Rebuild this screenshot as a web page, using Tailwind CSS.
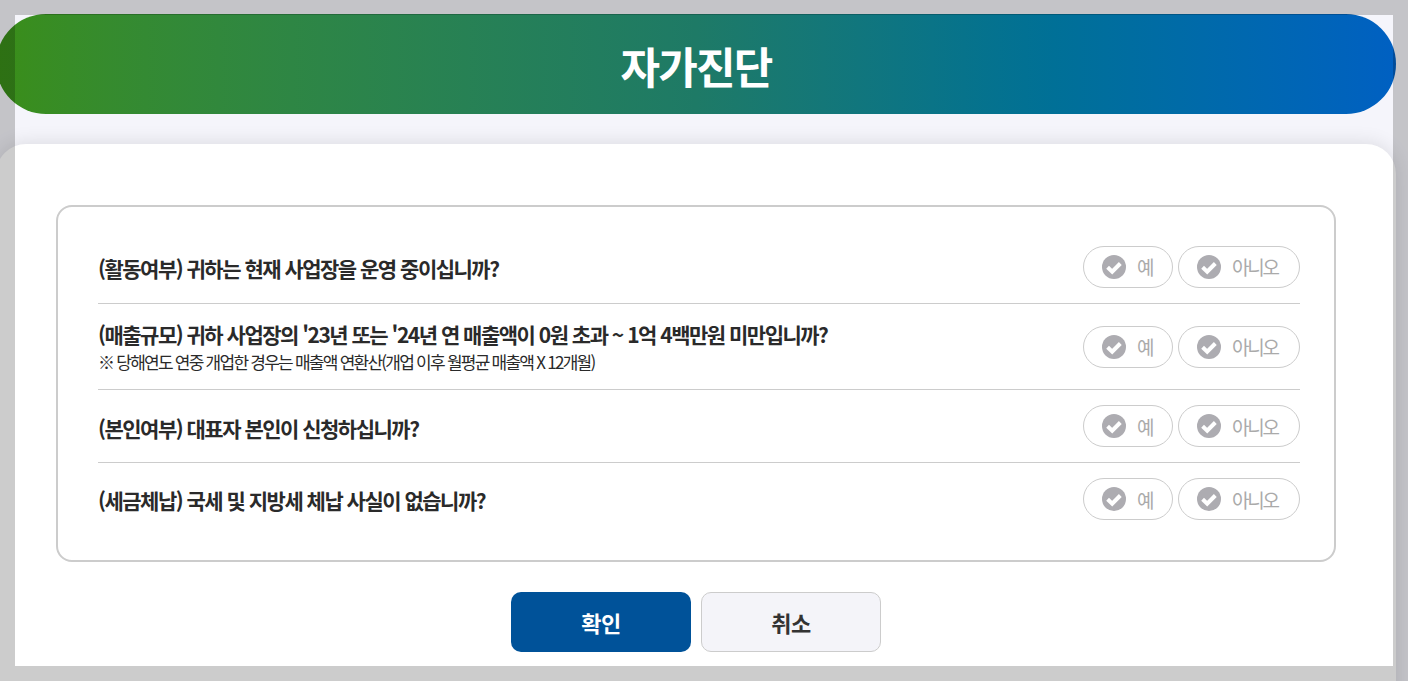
<!DOCTYPE html>
<html lang="ko">
<head>
<meta charset="utf-8">
<script src="https://cdn.jsdelivr.net/npm/@tailwindcss/browser@4"></script>
</head>
<body class="bg-[#f5f5fb]">
<div class="relative w-[1408px] h-[681px] overflow-hidden font-['Noto_Sans_CJK_KR',sans-serif]">
  <div class="ml-[-4px] w-[1400px] pt-[14px] flex flex-col gap-[30px]">
    <header class="h-[100px] rounded-[50px] bg-gradient-to-r from-[#3a8e17] via-[#1e7a66] via-50% to-[#0060c2] flex items-center justify-center">
      <h1 class="text-[43px] font-bold text-white tracking-[-1.8px] leading-none pt-[2px]">자가진단</h1>
    </header>
    <main class="h-[600px] bg-white rounded-t-[30px] shadow-[0_0_20px_rgba(0,0,0,0.12)] pt-[61px] pl-[60px] pr-[60px] flex flex-col items-start">
      <section class="w-[1280px] border-2 border-[#ccc] rounded-[16px] pt-[24px] pb-[25px] pl-[40px] pr-[34px] flex flex-col text-[#2a2a2a]">
        <div class="h-[73px] border-b border-[#ccc] flex items-center justify-between pb-[1px]">
          <p class="pt-[3px] text-[21px] leading-[30px] font-semibold tracking-[-1.5px]">(활동여부) 귀하는 현재 사업장을 운영 중이십니까?</p>
          <div class="flex gap-[5px] text-[19px] leading-[28px] tracking-[-2.2px] text-[#aaa]">
            <div class="w-[90px] h-[42px] rounded-[21px] border border-[#ccc] flex items-center gap-[11px] pl-[18px]"><svg class="w-[24px] h-[24px]" viewBox="0 0 24 24"><circle cx="12" cy="12" r="12" fill="#adacb1"/><path d="M5.6 12.3l4.6 4.4 8.1-8.2" fill="none" stroke="#fff" stroke-width="4"/></svg><span class="pt-[1px]">예</span></div>
            <div class="w-[122px] h-[42px] rounded-[21px] border border-[#ccc] flex items-center gap-[11px] pl-[18px]"><svg class="w-[24px] h-[24px]" viewBox="0 0 24 24"><circle cx="12" cy="12" r="12" fill="#adacb1"/><path d="M5.6 12.3l4.6 4.4 8.1-8.2" fill="none" stroke="#fff" stroke-width="4"/></svg><span class="pt-[1px]">아니오</span></div>
          </div>
        </div>
        <div class="h-[86px] border-b border-[#ccc] flex items-center justify-between">
          <div class="pt-[2px]">
            <p class="text-[21px] font-semibold tracking-[-1.5px] leading-[28px]">(매출규모) 귀하 사업장의 '23년 또는 '24년 연 매출액이 0원 초과 ~ 1억 4백만원 미만입니까?</p>
            <p class="text-[17px] tracking-[-1.75px] leading-[28px]">※ 당해연도 연중 개업한 경우는 매출액 연환산(개업 이후 월평균 매출액 X 12개월)</p>
          </div>
          <div class="flex gap-[5px] text-[19px] leading-[28px] tracking-[-2.2px] text-[#aaa]">
            <div class="w-[90px] h-[42px] rounded-[21px] border border-[#ccc] flex items-center gap-[11px] pl-[18px]"><svg class="w-[24px] h-[24px]" viewBox="0 0 24 24"><circle cx="12" cy="12" r="12" fill="#adacb1"/><path d="M5.6 12.3l4.6 4.4 8.1-8.2" fill="none" stroke="#fff" stroke-width="4"/></svg><span class="pt-[1px]">예</span></div>
            <div class="w-[122px] h-[42px] rounded-[21px] border border-[#ccc] flex items-center gap-[11px] pl-[18px]"><svg class="w-[24px] h-[24px]" viewBox="0 0 24 24"><circle cx="12" cy="12" r="12" fill="#adacb1"/><path d="M5.6 12.3l4.6 4.4 8.1-8.2" fill="none" stroke="#fff" stroke-width="4"/></svg><span class="pt-[1px]">아니오</span></div>
          </div>
        </div>
        <div class="h-[73px] border-b border-[#ccc] flex items-center justify-between">
          <p class="pt-[3px] text-[21px] leading-[30px] font-semibold tracking-[-1.5px]">(본인여부) 대표자 본인이 신청하십니까?</p>
          <div class="flex gap-[5px] text-[19px] leading-[28px] tracking-[-2.2px] text-[#aaa]">
            <div class="w-[90px] h-[42px] rounded-[21px] border border-[#ccc] flex items-center gap-[11px] pl-[18px]"><svg class="w-[24px] h-[24px]" viewBox="0 0 24 24"><circle cx="12" cy="12" r="12" fill="#adacb1"/><path d="M5.6 12.3l4.6 4.4 8.1-8.2" fill="none" stroke="#fff" stroke-width="4"/></svg><span class="pt-[1px]">예</span></div>
            <div class="w-[122px] h-[42px] rounded-[21px] border border-[#ccc] flex items-center gap-[11px] pl-[18px]"><svg class="w-[24px] h-[24px]" viewBox="0 0 24 24"><circle cx="12" cy="12" r="12" fill="#adacb1"/><path d="M5.6 12.3l4.6 4.4 8.1-8.2" fill="none" stroke="#fff" stroke-width="4"/></svg><span class="pt-[1px]">아니오</span></div>
          </div>
        </div>
        <div class="h-[72px] flex items-center justify-between">
          <p class="pt-[2px] text-[21px] leading-[30px] font-semibold tracking-[-1.5px]">(세금체납) 국세 및 지방세 체납 사실이 없습니까?</p>
          <div class="flex gap-[5px] text-[19px] leading-[28px] tracking-[-2.2px] text-[#aaa]">
            <div class="w-[90px] h-[42px] rounded-[21px] border border-[#ccc] flex items-center gap-[11px] pl-[18px]"><svg class="w-[24px] h-[24px]" viewBox="0 0 24 24"><circle cx="12" cy="12" r="12" fill="#adacb1"/><path d="M5.6 12.3l4.6 4.4 8.1-8.2" fill="none" stroke="#fff" stroke-width="4"/></svg><span class="pt-[1px]">예</span></div>
            <div class="w-[122px] h-[42px] rounded-[21px] border border-[#ccc] flex items-center gap-[11px] pl-[18px]"><svg class="w-[24px] h-[24px]" viewBox="0 0 24 24"><circle cx="12" cy="12" r="12" fill="#adacb1"/><path d="M5.6 12.3l4.6 4.4 8.1-8.2" fill="none" stroke="#fff" stroke-width="4"/></svg><span class="pt-[1px]">아니오</span></div>
          </div>
        </div>
      </section>
      <div class="mt-[30px] w-[1280px] flex justify-center gap-[10px]">
        <button class="w-[180px] h-[60px] rounded-[10px] bg-[#005299] text-white text-[22px] font-bold tracking-[-0.5px]">확인</button>
        <button class="w-[180px] h-[60px] rounded-[10px] bg-[#f4f4f9] border border-[#ccc] text-[#333] text-[22px] font-bold tracking-[-0.5px]">취소</button>
      </div>
    </main>
  </div>
  <div class="absolute left-[15px] top-[15px] w-[1378px] h-[651px] shadow-[0_0_0_2000px_rgba(0,0,0,0.2)] pointer-events-none"></div>
</div>
</body>
</html>
